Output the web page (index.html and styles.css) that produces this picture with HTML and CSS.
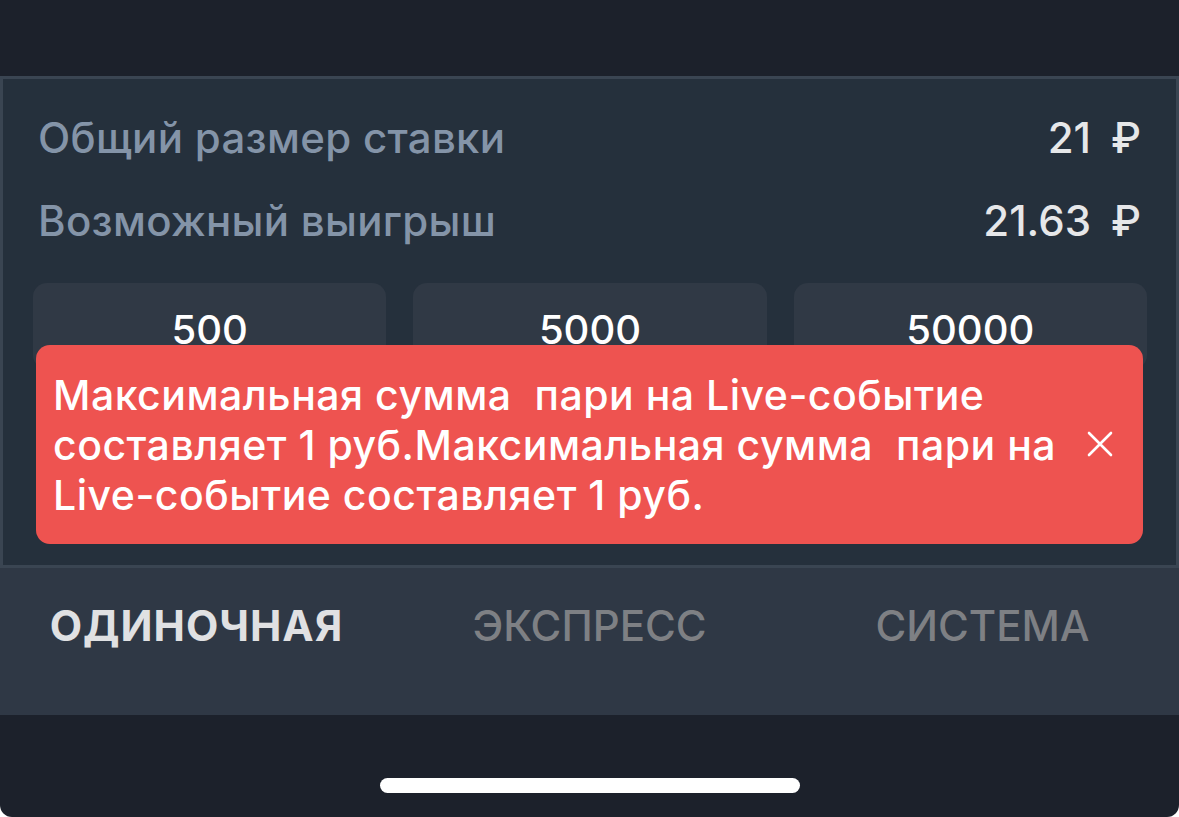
FILE: index.html
```html
<!DOCTYPE html>
<html lang="ru">
<head>
<meta charset="UTF-8" />
<meta name="viewport" content="width=device-width, initial-scale=1" />
<title>Купон</title>
<link rel="stylesheet" href="styles.css">
</head>
<body>

<div class="screen">
  <div class="top"></div>

  <div class="panel">
    <div class="row">
      <span class="label">Общий размер ставки</span>
      <span class="value">21<span class="rub">₽</span></span>
    </div>
    <div class="row">
      <span class="label">Возможный выигрыш</span>
      <span class="value">21.63<span class="rub">₽</span></span>
    </div>

    <div class="quick">
      <button class="amount">500</button>
      <button class="amount">5000</button>
      <button class="amount">50000</button>
    </div>

    <div class="toast">
      <p class="toast-text">Максимальная сумма&nbsp; пари на Live-событие<br>составляет 1 руб.Максимальная сумма&nbsp; пари на<br>Live-событие составляет 1 руб.</p>
      <button class="toast-close" aria-label="Закрыть">
        <svg width="26" height="26" viewBox="0 0 26 26"><path d="M2 2 L24 24 M24 2 L2 24" stroke="#fff" stroke-width="2.6" stroke-linecap="round"/></svg>
      </button>
    </div>
  </div>

  <div class="tabs">
    <div class="tab active">ОДИНОЧНАЯ</div>
    <div class="tab">ЭКСПРЕСС</div>
    <div class="tab">СИСТЕМА</div>
  </div>

  <div class="bottom">
    <div class="home-bar"></div>
  </div>
</div>

</body>
</html>
```

FILE: styles.css
```css
* {
  box-sizing: border-box;
}
body {
  margin: 0;
  background: #ffffff;
  font-family: Inter, 'Noto Sans', sans-serif;
}
.screen {
  width: 1179px;
  height: 817px;
  background: #1c212b;
  border-radius: 0 0 12px 12px;
  overflow: hidden;
  display: flex;
  flex-direction: column;
}
.top {
  height: 76px;
}
.panel {
  position: relative;
  height: 492px;
  background: #25303c;
  border: 3px solid #3a4552;
  padding: 33px 29px 0 30px;
}
.row {
  display: flex;
  justify-content: space-between;
  align-items: center;
  height: 50px;
  margin-bottom: 33px;
  padding-left: 5px;
  padding-right: 6px;
}
.label {
  font-size: 42px;
  font-weight: 500;
  letter-spacing: 0.3px;
  color: #8494a8;
}
.value {
  font-size: 42px;
  font-weight: 500;
  color: #e6e7e9;
}
.rub {
  margin-left: 20px;
}
.quick {
  display: flex;
  gap: 27px;
  margin-top: 38px;
}
.amount {
  display: block;
  flex: 1;
  height: 86px;
  border: none;
  border-radius: 14px;
  background: #303945;
  color: #ffffff;
  font-family: inherit;
  font-size: 40px;
  font-weight: 500;
  padding: 7px 0 0;
  line-height: 46px;
  text-align: center;
}
.toast {
  position: absolute;
  left: 33px;
  top: 266px;
  width: 1107px;
  height: 199px;
  background: #ee5350;
  border-radius: 14px;
  display: flex;
  align-items: center;
  justify-content: space-between;
  padding: 0 30px 0 17px;
}
.toast-text {
  margin: 0;
  color: #ffffff;
  font-size: 41px;
  font-weight: 500;
  letter-spacing: 0.5px;
  line-height: 50px;
  white-space: nowrap;
}
.toast-close {
  background: none;
  border: none;
  padding: 0;
  width: 26px;
  height: 26px;
  margin-bottom: 2px;
}
.toast-close svg {
  display: block;
}
.tabs {
  height: 147px;
  background: #2f3845;
  display: grid;
  grid-template-columns: 1fr 1fr 1fr;
  padding-top: 33px;
}
.tab {
  text-align: center;
  font-size: 42px;
  font-weight: 500;
  color: #7e8084;
  height: 50px;
  line-height: 50px;
}
.tab.active {
  font-weight: 700;
  letter-spacing: 1px;
  color: #e0e1e3;
}
.bottom {
  flex: 1;
  display: flex;
  justify-content: center;
  align-items: flex-end;
  padding-bottom: 24px;
}
.home-bar {
  width: 420px;
  height: 15px;
  border-radius: 8px;
  background: #ffffff;
}
```
